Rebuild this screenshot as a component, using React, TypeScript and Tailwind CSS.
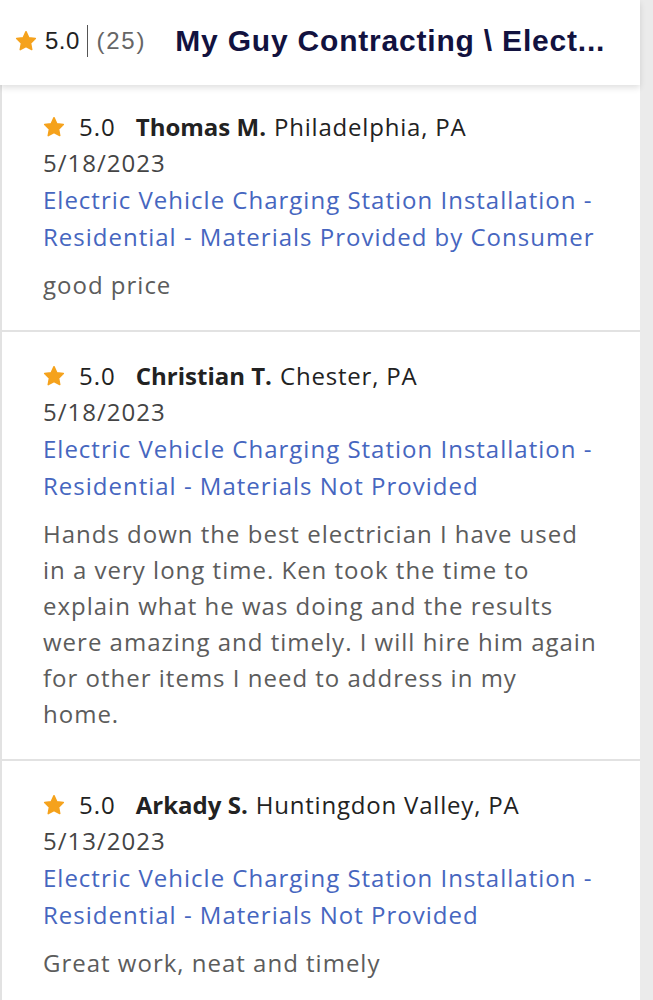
import React from "react";

type Review = {
    rating: string;
    name: string;
    location: string;
    date: string;
    service: string[];
    text: string;
};

const reviews: Review[] = [
    {
        rating: "5.0",
        name: "Thomas M.",
        location: "Philadelphia, PA",
        date: "5/18/2023",
        service: ["Electric Vehicle Charging Station Installation -", "Residential - Materials Provided by Consumer"],
        text: "good price",
    },
    {
        rating: "5.0",
        name: "Christian T.",
        location: "Chester, PA",
        date: "5/18/2023",
        service: ["Electric Vehicle Charging Station Installation -", "Residential - Materials Not Provided"],
        text: "Hands down the best electrician I have used in a very long time. Ken took the time to explain what he was doing and the results were amazing and timely. I will hire him again for other items I need to address in my home.",
    },
    {
        rating: "5.0",
        name: "Arkady S.",
        location: "Huntingdon Valley, PA",
        date: "5/13/2023",
        service: ["Electric Vehicle Charging Station Installation -", "Residential - Materials Not Provided"],
        text: "Great work, neat and timely",
    },
];

function Star({ size }: { size: number }) {
    return (
        <svg width={size} height={size} viewBox="0 0 24 24" className="shrink-0">
            <path
                d="M12 1.8l3.1 6.6 7.1.9-5.2 5 1.3 7.1L12 18l-6.3 3.4 1.3-7.1-5.2-5 7.1-.9z"
                fill="#f5a21c"
                stroke="#f5a21c"
                strokeWidth="1.6"
                strokeLinejoin="round"
            />
        </svg>
    );
}

function ReviewCard({ review, first }: { review: Review; first: boolean }) {
    return (
        <div
            className={`border-b-2 border-[#e2e2e2] pl-[41px] pr-[42px] ${first ? "pt-[24px]" : "pt-[26px]"} pb-[27px] text-[24px] tracking-[1px]`}
            style={{ fontFamily: '"Open Sans", "Noto Sans", sans-serif' }}
        >
            <div className="flex items-center h-[36px]">
                <Star size={22} />
                <span className="ml-[14px] text-[#222]">{review.rating}</span>
                <span className="ml-[20px] font-bold text-[#222] tracking-[0px]">{review.name}</span>
                <span className="ml-[8px] text-[#222] tracking-[0.8px]">{review.location}</span>
            </div>
            <div className="h-[36px] leading-[36px] text-[#444]">{review.date}</div>
            <div className="leading-[37px] text-[#4666bf]">
                {review.service.map((line, i) => (
                    <div key={i} className="whitespace-nowrap">{line}</div>
                ))}
            </div>
            <p className="mt-[12px] leading-[36px] text-[#5c5c5c]">{review.text}</p>
        </div>
    );
}

export default function App() {
    return (
        <div className="min-h-screen bg-[#ebebeb]">
            <div className="w-[640px] bg-white">
                <div
                    className="relative z-10 flex items-center h-[85px] pl-[15px] pb-[4px] bg-white shadow-[0_3px_6px_rgba(0,0,0,0.12)]"
                    style={{ fontFamily: '"Liberation Sans", Arial, sans-serif' }}
                >
                    <Star size={22} />
                    <span className="ml-[8px] text-[24px] tracking-[0.5px] text-[#222]">5.0</span>
                    <span className="ml-[7px] w-[1.5px] h-[32px] bg-[#555]" />
                    <span className="ml-[8px] text-[24px] tracking-[1.8px] text-[#666]">(25)</span>
                    <span className="ml-[29px] text-[30px] font-bold tracking-[0.8px] text-[#12123f]">
                        My Guy Contracting \ Elect...
                    </span>
                </div>
                <div className="border-l-2 border-[#e2e2e2]">
                    {reviews.map((r, i) => (
                        <ReviewCard key={i} review={r} first={i === 0} />
                    ))}
                </div>
            </div>
        </div>
    );
}
